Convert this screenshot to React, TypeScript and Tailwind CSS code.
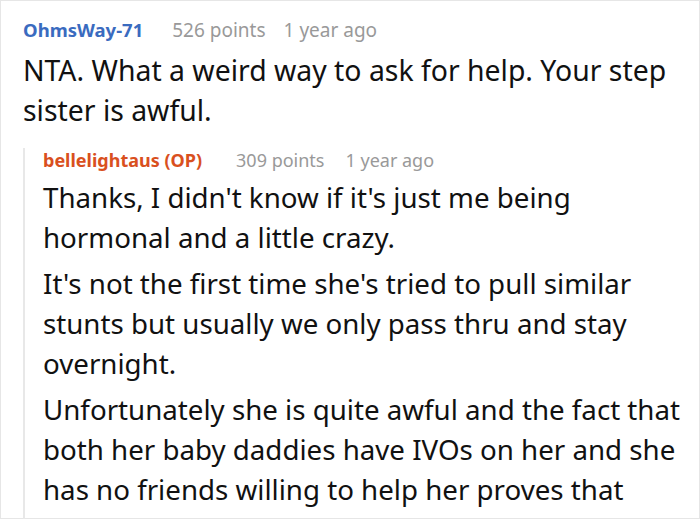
import React from "react";

const font = { fontFamily: '"Noto Sans", "Open Sans", sans-serif' };

export default function App() {
  return (
    <div className="w-[700px] h-[520px] bg-white overflow-hidden" style={font}>
      <div className="h-[519px] border border-[#e6e6e6] pl-[22px] pr-[10px] pt-[17px]">
        <div className="flex items-baseline text-[18.5px] leading-[24px]">
          <span className="font-bold text-[#3a6bbf]">OhmsWay-71</span>
          <span className="ml-[29px] text-[19px] text-[#999999]">526 points</span>
          <span className="ml-[18px] text-[19px] text-[#999999]">1 year ago</span>
        </div>
        <div className="mt-[8px] text-[28.4px] leading-[40px] text-[#111111]">
          NTA. What a weird way to ask for help. Your step sister is awful.
        </div>
        <div className="mt-[18px] border-l-2 border-[#e8e8e8] pl-[18px] pb-[10px]">
          <div className="flex items-baseline text-[18px] leading-[24px]">
            <span className="font-bold text-[#d9501e]">bellelightaus (OP)</span>
            <span className="ml-[34px] text-[#999999]">309 points</span>
            <span className="ml-[21px] text-[#999999]">1 year ago</span>
          </div>
          <div className="mt-[5px] text-[27.7px] leading-[40px] text-[#111111]">
            <p>Thanks, I didn't know if it's just me being hormonal and a little crazy.</p>
            <p className="mt-[6px]">It's not the first time she's tried to pull similar stunts but usually we only pass thru and stay overnight.</p>
            <p className="mt-[6px]">Unfortunately she is quite awful and the fact that both her baby daddies have IVOs on her and she has no friends willing to help her proves that</p>
          </div>
        </div>
      </div>
    </div>
  );
}
